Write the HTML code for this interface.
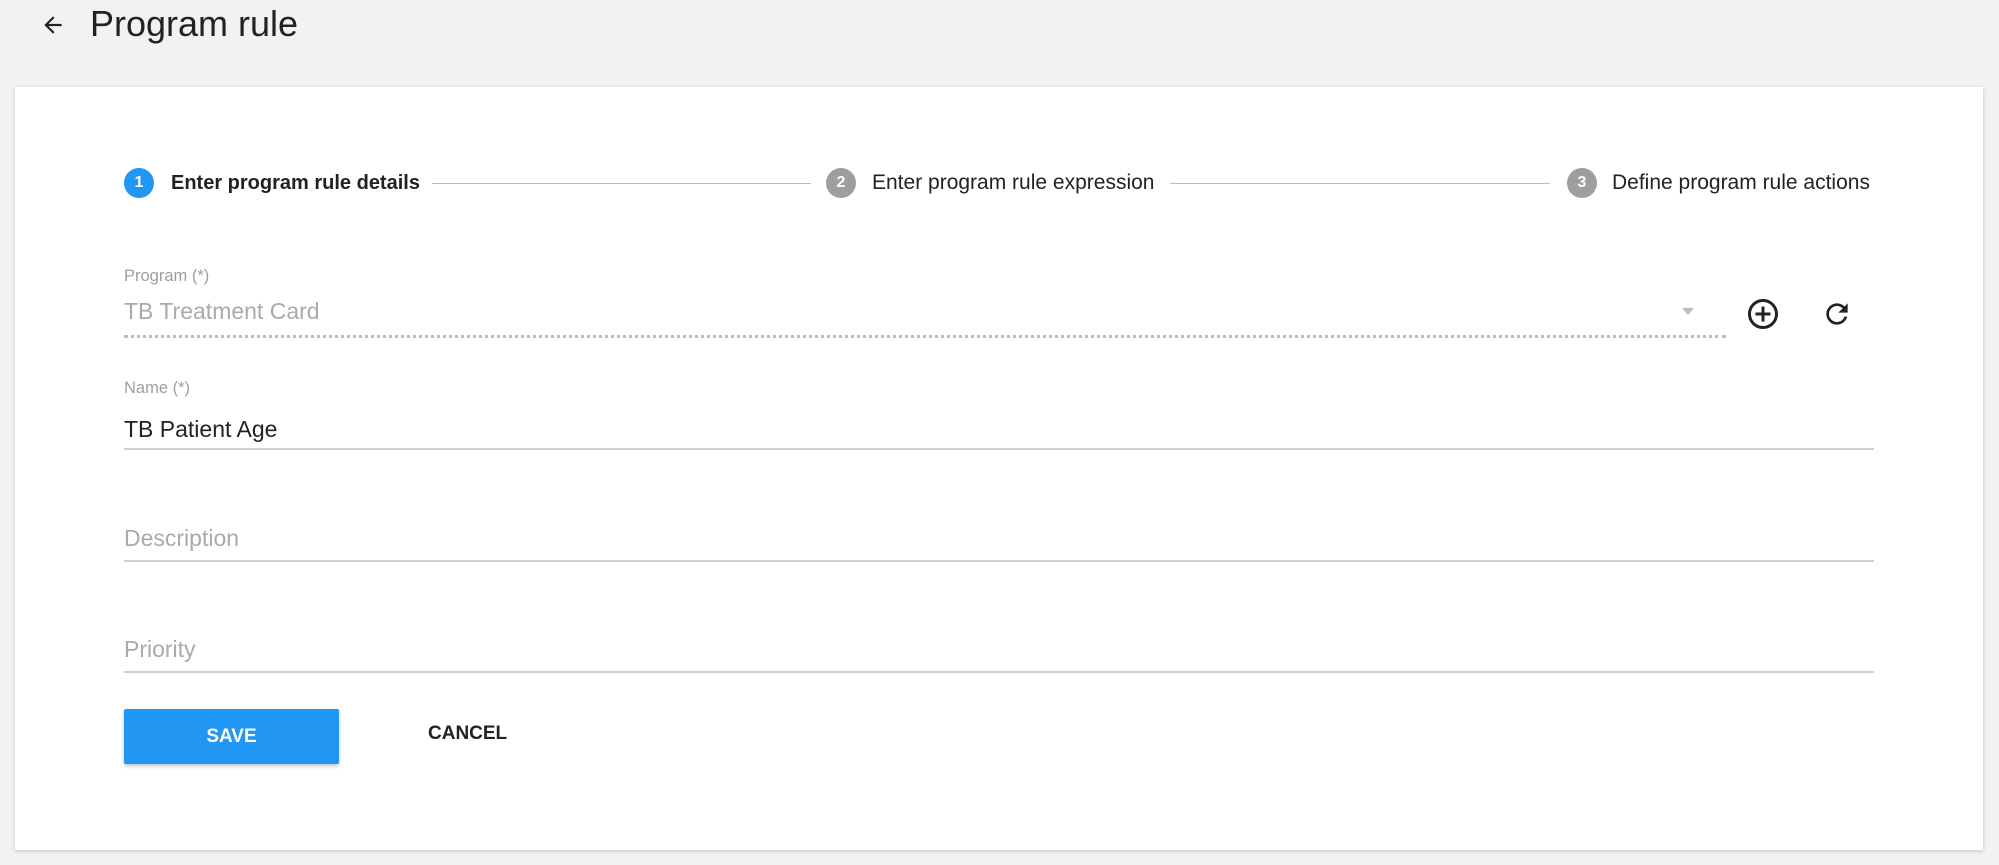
<!DOCTYPE html>
<html><head><meta charset="utf-8"><style>
*{margin:0;padding:0;box-sizing:border-box}
body{width:1999px;height:865px;background:#f2f2f2;font-family:"Liberation Sans",sans-serif;position:relative;overflow:hidden}
.abs{position:absolute;white-space:nowrap}
.card{position:absolute;left:15px;top:87px;width:1968px;height:763px;background:#fff;box-shadow:0 1px 4px rgba(0,0,0,.2)}
.circ{position:absolute;width:30px;height:30px;border-radius:50%;color:#fff;font-size:16px;font-weight:bold;text-align:center;line-height:30px;top:168px}
.step{position:absolute;top:170px;font-size:21px;color:#222;line-height:26px}
.sline{position:absolute;top:183px;height:1px;background:#bdbdbd}
.lbl{position:absolute;font-size:16.5px;color:#9e9e9e}
.val{position:absolute;font-size:23px}
.uline{position:absolute;left:124px;width:1750px;height:2px;background:#d0d0d0}
</style></head><body>
<svg class="abs" style="left:40px;top:12px" width="26" height="26" viewBox="0 0 24 24"><path d="M20 11H7.83l5.59-5.59L12 4l-8 8 8 8 1.41-1.41L7.83 13H20v-2z" fill="#222"/></svg>
<div class="abs" style="left:90px;top:3px;font-size:36px;color:#222">Program rule</div>
<div class="card"></div>
<div class="circ" style="left:124px;background:#2196f3">1</div>
<div class="step" style="left:171px;font-weight:bold;font-size:20px">Enter program rule details</div>
<div class="sline" style="left:432px;width:379px"></div>
<div class="circ" style="left:826px;background:#9e9e9e">2</div>
<div class="step" style="left:872px">Enter program rule expression</div>
<div class="sline" style="left:1170px;width:380px"></div>
<div class="circ" style="left:1567px;background:#9e9e9e">3</div>
<div class="step" style="left:1612px">Define program rule actions</div>

<div class="lbl" style="left:124px;top:267px">Program (*)</div>
<div class="val" style="left:124px;top:298px;color:#aaa">TB Treatment Card</div>
<div class="abs" style="left:124px;top:335px;width:1602px;border-top:3px dotted #bdbdbd"></div>
<div class="abs" style="left:1682px;top:308px;width:0;height:0;border-left:6px solid transparent;border-right:6px solid transparent;border-top:7px solid #bbb"></div>
<svg class="abs" style="left:1745px;top:296px" width="36" height="36" viewBox="0 0 24 24"><path d="M13 7h-2v4H7v2h4v4h2v-4h4v-2h-4V7zm-1-5C6.48 2 2 6.480 2 12s4.48 10 10 10 10-4.48 10-10S17.52 2 12 2zm0 18c-4.41 0-8-3.59-8-8s3.59-8 8-8 8 3.59 8 8-3.59 8-8 8z" fill="#222"/></svg>
<svg class="abs" style="left:1821px;top:298px" width="32" height="32" viewBox="0 0 24 24"><path d="M17.65 6.35C16.2 4.9 14.21 4 12 4c-4.42 0-7.99 3.58-7.99 8s3.57 8 7.99 8c3.73 0 6.84-2.55 7.73-6h-2.08c-.82 2.33-3.04 4-5.65 4-3.31 0-6-2.69-6-6s2.69-6 6-6c1.66 0 3.14.69 4.22 1.78L13 11h7V4l-2.35 2.35z" fill="#222"/></svg>

<div class="lbl" style="left:124px;top:379px">Name (*)</div>
<div class="val" style="left:124px;top:416px;color:#222">TB Patient Age</div>
<div class="uline" style="top:448px"></div>

<div class="val" style="left:124px;top:525px;color:#aaa">Description</div>
<div class="uline" style="top:560px"></div>

<div class="val" style="left:124px;top:636px;color:#aaa">Priority</div>
<div class="uline" style="top:671px"></div>

<div class="abs" style="left:124px;top:709px;width:215px;height:55px;background:#2196f3;border-radius:2px;box-shadow:0 2px 4px rgba(0,0,0,.25);color:#fff;font-weight:bold;font-size:19px;text-align:center;line-height:55px">SAVE</div>
<div class="abs" style="left:428px;top:723px;font-weight:bold;font-size:19px;color:#222">CANCEL</div>
</body></html>
